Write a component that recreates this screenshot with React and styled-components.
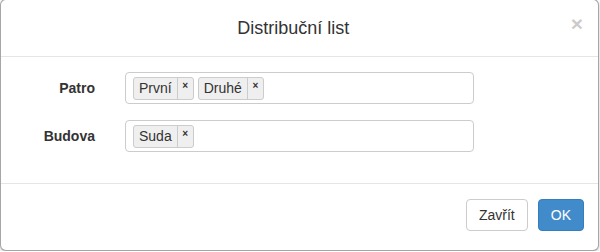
import React from "react";
import styled, { createGlobalStyle } from "styled-components";

const Global = createGlobalStyle`
  html, body { margin: 0; padding: 0; background: #fff; }
  body { font-family: "Liberation Sans", Arial, sans-serif; font-size: 14px; color: #333; }
  * { box-sizing: border-box; }
`;

const Modal = styled.div`
  width: 599px;
  margin-top: -1px;
  background: #fff;
  border: 1px solid rgba(0, 0, 0, 0.35);
  border-radius: 6px;
  box-shadow: 0 1px 3px rgba(0, 0, 0, 0.25);
  display: flex;
  flex-direction: column;
`;

const Header = styled.div`
  display: flex;
  align-items: flex-start;
  padding: 15px;
  border-bottom: 1px solid #e5e5e5;
`;

const Title = styled.h4`
  flex: 1;
  margin: 0;
  text-align: center;
  font-size: 18px;
  font-weight: normal;
  line-height: 26px;
  color: #333;
`;

const Close = styled.button`
  border: 0;
  background: none;
  padding: 0;
  margin-top: -2px;
  font-family: "Liberation Sans", Arial, sans-serif;
  font-size: 21px;
  font-weight: bold;
  line-height: 1;
  color: #000;
  opacity: 0.2;
`;

const Body = styled.div`
  padding: 15px 15px 31px;
  display: flex;
  flex-direction: column;
  gap: 16px;
`;

const Row = styled.div`
  display: flex;
  align-items: center;
  gap: 30px;
`;

const Label = styled.label`
  width: 79px;
  text-align: right;
  font-weight: bold;
  font-size: 14px;
  color: #333;
`;

const TagInput = styled.div`
  width: 349px;
  height: 32px;
  border: 1px solid #ccc;
  border-radius: 4px;
  padding: 4px 7px;
  display: flex;
  gap: 4px;
  align-items: flex-start;
`;

const Tag = styled.span`
  display: inline-flex;
  height: 23px;
  border: 1px solid #ccc;
  border-radius: 3px;
  background: #efefef;
  color: #333;
`;

const TagText = styled.span`
  padding: 0 5px;
  line-height: 21px;
  font-size: 14px;
`;

const TagRemove = styled.span`
  width: 16px;
  border-left: 1px solid #ccc;
  text-align: center;
  font-size: 10px;
  font-weight: bold;
  line-height: 16px;
  color: #333;
`;

const Footer = styled.div`
  border-top: 1px solid #e5e5e5;
  padding: 15px 14px 19px 15px;
  display: flex;
  justify-content: flex-end;
  gap: 10px;
`;

const Button = styled.button`
  height: 32px;
  padding: 6px 12px;
  font-family: "Liberation Sans", Arial, sans-serif;
  font-size: 14px;
  line-height: 18px;
  border-radius: 4px;
  border: 1px solid ${(p) => (p.$primary ? "#357ebd" : "#ccc")};
  background: ${(p) => (p.$primary ? "#428bca" : "#fff")};
  color: ${(p) => (p.$primary ? "#fff" : "#333")};
`;

const fields = [
  { label: "Patro", tags: ["První", "Druhé"] },
  { label: "Budova", tags: ["Suda"] },
];

export default function App() {
  return (
    <>
      <Global />
      <Modal>
        <Header>
          <Title>Distribuční list</Title>
          <Close>×</Close>
        </Header>
        <Body>
          {fields.map((f) => (
            <Row key={f.label}>
              <Label>{f.label}</Label>
              <TagInput>
                {f.tags.map((t) => (
                  <Tag key={t}>
                    <TagText>{t}</TagText>
                    <TagRemove>×</TagRemove>
                  </Tag>
                ))}
              </TagInput>
            </Row>
          ))}
        </Body>
        <Footer>
          <Button>Zavřít</Button>
          <Button $primary>OK</Button>
        </Footer>
      </Modal>
    </>
  );
}
